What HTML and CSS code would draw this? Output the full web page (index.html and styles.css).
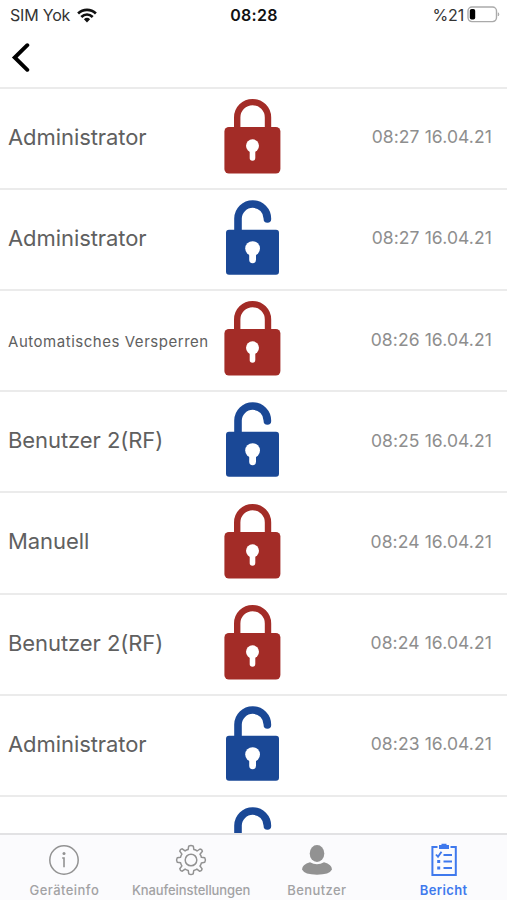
FILE: index.html
```html
<!DOCTYPE html>
<html lang="de">
<head>
<meta charset="utf-8">
<title>Bericht</title>
<link rel="stylesheet" href="styles.css">
</head>
<body>
<svg class="defs" width="0" height="0" aria-hidden="true">
  <symbol id="locked" viewBox="0 0 90 100">
    <path d="M27.2 42V29.5a15.400 15.400 0 0 1 30.800 0V42" fill="none" stroke="#a32c27" stroke-width="6.400"/>
    <rect x="14.4" y="39" width="56" height="46.600" rx="4.5" fill="#a32c27"/>
    <circle cx="42.5" cy="57.800" r="6.5" fill="#fff"/>
    <path d="M42.5 60v10" stroke="#fff" stroke-width="5.6" stroke-linecap="round"/>
  </symbol>
  <symbol id="unlocked" viewBox="0 0 90 100">
    <path d="M28 44V29.600a14.700 14.700 0 0 1 29.400 0.300" fill="none" stroke="#1a4896" stroke-width="7.600" stroke-linecap="round"/>
    <rect x="16" y="40.800" width="53" height="45" rx="3" fill="#1a4896"/>
    <circle cx="42.6" cy="59.600" r="7.4" fill="#fff"/>
    <path d="M42.6 62v8.800" stroke="#fff" stroke-width="6.8" stroke-linecap="round"/>
  </symbol>
</svg>
<div class="screen">
  <div class="status">
    <div class="carrier"><span>SIM Yok</span>
      <svg width="20" height="15" viewBox="0 0 20 15">
        <g fill="none" stroke="#111" stroke-width="2.7"><path d="M1.1 5.5C6.2.7 13.8.7 18.9 5.5"/><path d="M4.3 8.9C7.7 5.7 12.3 5.7 15.7 8.9"/></g>
        <path d="M6.9 11.2q3.1-2.7 6.2 0L10 14.4z" fill="#111"/>
      </svg>
    </div>
    <div class="clock">08:28</div>
    <div class="battery"><span>%21</span>
      <svg width="33" height="17" viewBox="0 0 33 17">
        <rect x="1" y="1" width="28.500" height="14.6" rx="4" fill="#fff" stroke="#aaa" stroke-width="1.4"/>
        <rect x="2.8" y="3" width="5.4" height="10.6" rx="1.8" fill="#000"/>
        <path d="M31.300 6.8q1 1.500 0 3z" fill="#aaa" stroke="#aaa"/>
      </svg>
    </div>
  </div>
  <header class="nav">
    <svg width="20" height="32" viewBox="0 0 20 32"><path d="M17.300 3.200L4.700 15.500 17.300 27.800" fill="none" stroke="#000" stroke-width="3.9" stroke-linecap="round" stroke-linejoin="miter"/></svg>
  </header>
  <main class="list">
    <div class="row"><span class="name">Administrator</span><svg class="lock"><use href="#locked"/></svg><span class="time">08:27 16.04.21</span></div>
    <div class="row"><span class="name">Administrator</span><svg class="lock"><use href="#unlocked"/></svg><span class="time">08:27 16.04.21</span></div>
    <div class="row"><span class="name small">Automatisches Versperren</span><svg class="lock"><use href="#locked"/></svg><span class="time">08:26 16.04.21</span></div>
    <div class="row"><span class="name">Benutzer 2(RF)</span><svg class="lock"><use href="#unlocked"/></svg><span class="time">08:25 16.04.21</span></div>
    <div class="row"><span class="name">Manuell</span><svg class="lock"><use href="#locked"/></svg><span class="time">08:24 16.04.21</span></div>
    <div class="row"><span class="name">Benutzer 2(RF)</span><svg class="lock"><use href="#locked"/></svg><span class="time">08:24 16.04.21</span></div>
    <div class="row"><span class="name">Administrator</span><svg class="lock"><use href="#unlocked"/></svg><span class="time">08:23 16.04.21</span></div>
    <div class="row"><span class="name"></span><svg class="lock"><use href="#unlocked"/></svg><span class="time"></span></div>
  </main>
  <nav class="tabs">
    <div class="tab info">
      <svg width="36" height="36" viewBox="0 0 36 36"><circle cx="18" cy="18" r="14.2" fill="none" stroke="#929292" stroke-width="1.5"/><circle cx="18" cy="11.4" r="1.5" fill="#929292"/><path d="M16.2 16H18v9.2" fill="none" stroke="#929292" stroke-width="1.6"/></svg>
      <span>Geräteinfo</span>
    </div>
    <div class="tab settings">
      <svg width="36" height="36" viewBox="0 0 36 36"><g fill="none" stroke="#929292" stroke-width="1.5" stroke-linejoin="round"><circle cx="18" cy="18" r="5.8"/><path d="M15.7 4.2Q18 2.9 20.3 4.2L20.9 7.6Q23 8 24.1 9L27 7Q29 7.2 29.4 9.2L27 12.2Q28.1 13.5 28.4 15.3L31.8 15.8Q33.1 18 31.8 20.2L28.4 20.9Q28 22.8 27 24L29.1 26.9Q28.9 29 26.8 29.3L23.9 27.1Q22.6 28 20.8 28.4L20.2 31.8Q18 33.1 15.8 31.8L15.2 28.4Q13.4 28 12.1 27.1L9.2 29.2Q7 28.9 6.8 26.8L8.9 23.9Q8 22.6 7.6 20.8L4.2 20.2Q2.9 18 4.2 15.8L7.6 15.2Q8 13.4 8.9 12.1L6.8 9.2Q7.1 7.1 9.2 6.8L12.1 8.9Q13.4 8 15.1 7.6Z"/></g></svg>
      <span>Knaufeinstellungen</span>
    </div>
    <div class="tab">
      <svg width="36" height="36" viewBox="0 0 36 36"><g fill="#929292"><ellipse cx="18" cy="11.5" rx="7.3" ry="8.4"/><path d="M11 20.300q7 4 14 0 8 2.200 8 7.300Q30.500 32.800 18 32.800T3 27.600q0-5.100 8-7.300z"/></g></svg>
      <span>Benutzer</span>
    </div>
    <div class="tab active">
      <svg width="36" height="36" viewBox="0 0 36 36"><rect x="6.400" y="5" width="23.400" height="28" fill="none" stroke="#3f79ed" stroke-width="2"/><path d="M11.500 3h13v4.500h-13z" fill="#fbfbfd"/><path d="M13 3h2.500V1.800h5V3H23v4H13z" fill="#3f79ed"/><g fill="none" stroke="#3f79ed" stroke-width="1.900"><path d="M10 12.500l2 2.300 3.500-5M17.500 13H26M17.500 19.500H26M17.500 26H26"/><path d="M11.200 19.500h3M11.200 26h3" stroke-width="2.800"/></g></svg>
      <span>Bericht</span>
    </div>
  </nav>
</div>
</body>
</html>
```
FILE: styles.css
```css
* { box-sizing: border-box; }
body { margin: 0; background: #fff; font-family: Inter, "Liberation Sans", sans-serif; }
svg { display: block; flex: none; }
.defs { position: absolute; }
.screen { width: 507px; height: 900px; display: flex; flex-direction: column; overflow: hidden; }

.status { height: 30px; flex: none; display: grid; grid-template-columns: 1fr auto 1fr; align-items: center; padding: 0 7px 0 10px; font-size: 16px; color: #333; }
.carrier { display: flex; align-items: center; gap: 7px; letter-spacing: -.2px; }
.clock { font-weight: 600; letter-spacing: .3px; color: #111; margin-left: -2px; }
.battery { display: flex; align-items: center; justify-content: flex-end; gap: 3px; letter-spacing: -.2px; }
.battery svg { margin-top: -2px; }

.nav { height: 56.8px; flex: none; padding: 12px 0 0 10px; }

.list { flex: 1; min-height: 0; overflow: hidden; }
.row { height: 101.15px; display: grid; grid-template-columns: 202px 90px 1fr; grid-template-rows: 96px; border-top: 2px solid #ebebeb; padding: 0 15px 0 8px; align-items: center; color: #606060; }
.name { font-size: 22px; white-space: nowrap; letter-spacing: -.07px; }
.small { font-size: 15px; letter-spacing: .53px; padding-top: 5px; }
.lock { width: 90px; height: 100px; align-self: start; margin-top: -.8px; }
.time { font-size: 17.5px; color: #8e8e8e; text-align: right; white-space: nowrap; letter-spacing: .1px; }

.tabs { height: 67px; flex: none; display: grid; grid-template-columns: repeat(4, 1fr); border-top: 2px solid #e2e2e4; background: #fbfbfd; }
.tab { display: flex; flex-direction: column; align-items: center; padding-top: 7px; color: #a2a2a4; font-size: 13px; font-weight: 500; line-height: 16px; }
.tab span { margin-top: 4px; white-space: nowrap; letter-spacing: .4px; }
.info, .settings { padding-left: 2px; }
.info span { letter-spacing: .45px; }
.settings span { letter-spacing: -.08px; }
.active { color: #3f79ed; font-weight: 600; }
```
